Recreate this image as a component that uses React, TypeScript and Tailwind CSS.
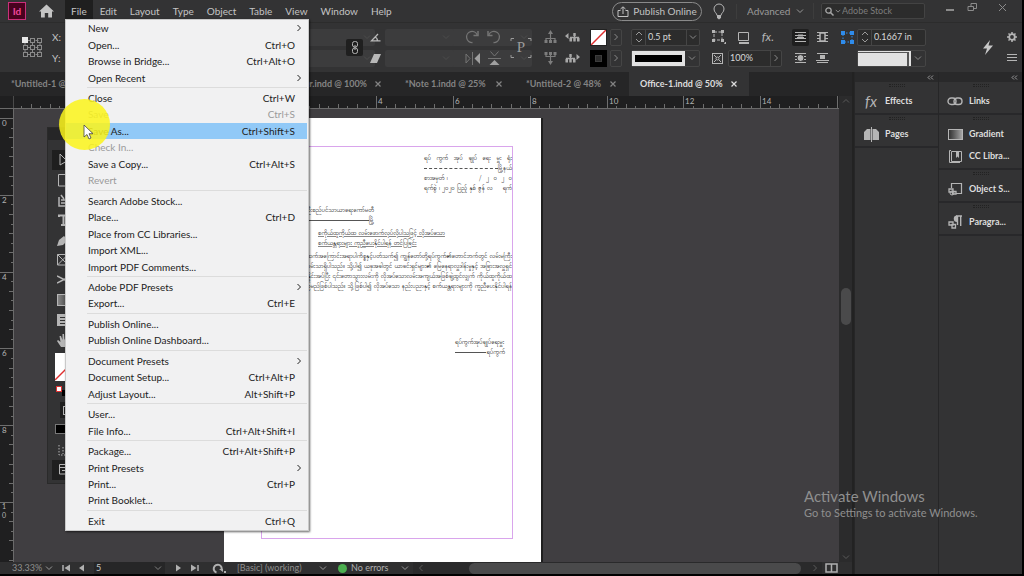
import { useState } from 'react';
import type { ReactNode } from 'react';

type MenuEntry = { label: string; keys?: string; sub?: boolean; off?: boolean };

const MENUS = ['File', 'Edit', 'Layout', 'Type', 'Object', 'Table', 'View', 'Window', 'Help'];

const FILE_MENU: MenuEntry[][] = [
  [
    { label: 'New', sub: true },
    { label: 'Open...', keys: 'Ctrl+O' },
    { label: 'Browse in Bridge...', keys: 'Ctrl+Alt+O' },
    { label: 'Open Recent', sub: true },
  ],
  [
    { label: 'Close', keys: 'Ctrl+W' },
    { label: 'Save', keys: 'Ctrl+S', off: true },
    { label: 'Save As...', keys: 'Ctrl+Shift+S' },
    { label: 'Check In...', off: true },
    { label: 'Save a Copy...', keys: 'Ctrl+Alt+S' },
    { label: 'Revert', off: true },
  ],
  [
    { label: 'Search Adobe Stock...' },
    { label: 'Place...', keys: 'Ctrl+D' },
    { label: 'Place from CC Libraries...' },
    { label: 'Import XML...' },
    { label: 'Import PDF Comments...' },
  ],
  [{ label: 'Adobe PDF Presets', sub: true }, { label: 'Export...', keys: 'Ctrl+E' }],
  [{ label: 'Publish Online...' }, { label: 'Publish Online Dashboard...' }],
  [
    { label: 'Document Presets', sub: true },
    { label: 'Document Setup...', keys: 'Ctrl+Alt+P' },
    { label: 'Adjust Layout...', keys: 'Alt+Shift+P' },
  ],
  [{ label: 'User...' }, { label: 'File Info...', keys: 'Ctrl+Alt+Shift+I' }],
  [
    { label: 'Package...', keys: 'Ctrl+Alt+Shift+P' },
    { label: 'Print Presets', sub: true },
    { label: 'Print...', keys: 'Ctrl+P' },
    { label: 'Print Booklet...' },
  ],
  [{ label: 'Exit', keys: 'Ctrl+Q' }],
];

const TABS = [
  { name: '*Untitled-1 @ 50%', width: 'w-[130px]' },
  { name: '*Letter.indd @ 100%', width: 'w-[264px] justify-end' },
  { name: '*Note 1.indd @ 25%', width: 'w-[121px]' },
  { name: '*Untitled-2 @ 48%', width: 'w-[114px]' },
  { name: 'Office-1.indd @ 50%', width: 'w-[120px]' },
];

// pixels per inch on the rulers
const INCH = 38.4;

function Icon({ w = 14, h = 14, box, className = '', children }: { w?: number; h?: number; box?: string; className?: string; children: ReactNode }) {
  return (
    <svg width={w} height={h} viewBox={box || `0 0 ${w} ${h}`} fill="none" stroke="currentColor" className={`shrink-0 ${className}`} aria-hidden="true">
      {children}
    </svg>
  );
}

function Chevron({ dir = 'down', className = '' }: { dir?: 'down' | 'up' | 'left' | 'right'; className?: string }) {
  const d = { down: 'M1 2.5 4 5.5 7 2.5', up: 'M1 5.5 4 2.5 7 5.5', left: 'M5.5 1 2.5 4 5.5 7', right: 'M2.5 1 5.5 4 2.5 7' }[dir];
  return <Icon w={8} h={8} className={className}><path d={d} /></Icon>;
}

function Stepper() {
  return (
    <span className="flex w-[14px] flex-col items-center justify-center border-r border-[#454545] text-[#999]">
      <Icon w={8} h={14}><path d="M1 5 4 2 7 5M1 9 4 12 7 9" /></Icon>
    </span>
  );
}

function DimField({ label, className = '' }: { label: string; className?: string }) {
  return (
    <div className={`flex h-[17px] items-center rounded-xs bg-[#3c3c3d] pr-1 text-[#4c4c4c] ${className}`}>
      <input aria-label={label} disabled className="min-w-0 flex-1" />
      <Chevron />
    </div>
  );
}

function Drop({ label, value, className = '' }: { label: string; value: string; className?: string }) {
  return (
    <label className={`flex items-center justify-between ${className}`}>
      <select aria-label={label} className="appearance-none outline-none">
        <option>{value}</option>
      </select>
      <Chevron className="text-[#999]" />
    </label>
  );
}

function MenuBar() {
  return (
    <header className="flex h-[23px] shrink-0 items-center border-b border-[#2c2c2c] bg-[#333334]">
      <div className="ml-2 flex size-[18px] items-center justify-center border border-[#c9307a] bg-[#49021f] text-[10px] leading-none font-bold text-[#f0479a]">Id</div>
      <button aria-label="Home" className="ml-[13px] text-[#c4c4c4]">
        <Icon w={15} h={14}><path fill="currentColor" stroke="none" d="M7.5.5 15 7.5H13V13.5H9.2V9H5.8V13.5H2V7.500H0Z" /></Icon>
      </button>
      <nav className="ml-[11px] flex h-full gap-px">
        {MENUS.map((m) => (
          <button key={m} className={`px-[6px] text-[10px] ${m === 'File' ? 'bg-[#1f1f1f]' : ''}`}>{m}</button>
        ))}
      </nav>
      <div className="ml-auto flex h-full items-center">
        <button className="flex h-[19px] w-[90px] items-center justify-center gap-1 rounded-full border border-[#8a8a8a] text-[10px] text-[#c2c2c2]">
          <Icon w={12} h={11}><path d="M3.500 4.500H1V10.500H11V4.500H8.500M6 8V1M3.500 3 6 .8 8.500 3" /></Icon>
          Publish Online
        </button>
        <button aria-label="Learn" className="ml-[11px] text-[#b5b5b5]">
          <Icon w={12} h={17}><path d="M4 12.500C4 10 1 9.500 1 6A5 5 0 0 1 11 6C11 9.500 8 10 8 12.500Z" /><path fill="currentColor" d="M4.500 13H7.500V15L6 16 4.500 15Z" /></Icon>
        </button>
        <Drop label="Workspace" value="Advanced" className="ml-[11px] h-[15px] w-[68px] border-l border-[#3d3d3d] pl-[10px] text-[10px] text-[#9a9a9a]" />
        <span className="ml-[9px] h-4 w-px bg-[#3d3d3d]" />
        <label className="ml-[7px] flex h-4 w-[104px] items-center rounded-xs border border-[#434343] bg-[#2c2c2c] px-[3px] text-[#a5a5a5]">
          <Icon w={9} h={9}><circle cx="3.500" cy="3.500" r="2.700" strokeWidth="1.300" /><path strokeWidth="1.500" d="M5.500 5.500 8.500 8.500" /></Icon>
          <Chevron className="scale-75" />
          <input aria-label="Search" placeholder="Adobe Stock" className="min-w-0 flex-1 text-[9px] outline-none placeholder:text-[#7c7c7c]" />
        </label>
        <div className="ml-[14px] flex h-full items-center text-[#8b8b8b]">
          <button aria-label="Minimize" className="flex w-[22px] justify-center"><Icon w={10} h={8}><path strokeWidth="2" d="M1 3H9" /></Icon></button>
          <button aria-label="Restore" className="mb-2 flex w-[22px] justify-center"><Icon w={11} h={10}><path d="M1 4.500H6.500V8.500H1ZM4 4V1.500H9.500V6.500H7" /></Icon></button>
          <button aria-label="Close window" className="mb-2 flex w-[39px] justify-center"><Icon w={9} h={9}><path d="M1 1 8 8M8 1 1 8" /></Icon></button>
        </div>
      </div>
    </header>
  );
}

function WrapIcon({ children }: { children?: ReactNode }) {
  return (
    <Icon w={13} h={12}>
      <path d="M1 1.500H12M1 4.500H12M1 7.500H12M1 10.500H12" />
      {children}
    </Icon>
  );
}

function TreeIcon({ className }: { className?: string }) {
  return <Icon w={13} h={14} className={className}><path strokeWidth="1.200" d="M6.500 12V2M2 12V8.500H11V12" /><path fill="currentColor" stroke="none" d="M4 4 6.500 0 9 4ZM.5 10H3.500V13H.5ZM5 10H8V13H5ZM9.500 10H12.500V13H9.500Z" /></Icon>;
}

function SideTree({ className = '' }: { className?: string }) {
  return <Icon w={15} h={10} className={className}><path strokeWidth="1.300" d="M5 5.500H13.500V9M9.500 2V9M5.500 9V5.500" /><path fill="currentColor" stroke="none" d="M0 4 3.500 1V7ZM4.500 6H7V9.500H4.500ZM8.300 6H10.700V9.500H8.300ZM12 6H14.500V9.500H12ZM8.300 1H10.700V4H8.300Z" /></Icon>;
}

function ControlBar() {
  const col = 'flex flex-col gap-1';
  const cell = 'flex h-[17px] items-center justify-center';
  const box = 'flex h-[17px] rounded-xs border border-[#454545]';
  return (
    <section aria-label="Control" className="flex h-[49px] shrink-0 items-center bg-[#333334] text-[10px]">
      <div className="flex w-[341px] items-center pl-[22px]">
        <Icon w={21} h={21} className="mr-[9px] text-[#8a8a8a]">
          <path d="M5.500 3.500H8.500M13.500 3.500H16.500M5.500 10.500H8.500M13.500 10.500H16.500M5.500 17.500H8.500M13.500 17.500H16.500M3 6V8M10.500 6V8M18 6V8M3 13V15M10.500 13V15M18 13V15" />
          {[1, 8, 15].map((y) => [1, 8, 15].map((x) => <rect key={`${x}${y}`} x={x + 0.5} y={y + 0.5} width="4" height="4" />))}
          <rect x="0" y="0" width="6" height="6" fill="#e8e8e8" stroke="none" />
        </Icon>
        <div className={`${col} flex-1`}>
          {['X', 'Y'].map((a) => (
            <div key={a} className="flex h-[17px] items-center gap-3">
              <span>{a}:</span>
              <DimField label={`${a} location`} className="flex-1" />
              <DimField label={a === 'X' ? 'Width' : 'Height'} className="flex-1" />
              <DimField label={`Scale ${a}`} className="flex-1" />
            </div>
          ))}
        </div>
      </div>
      <button aria-label="Constrain proportions" className="ml-[5px] flex size-[17px] items-center justify-center rounded-xs bg-[#1f1f1f] text-[#b5b5b5]">
        <Icon w={8} h={13}><rect x="1.500" y=".5" width="5" height="5.500" rx="2" /><rect x="1.500" y="7" width="5" height="5.500" rx="2" /><path d="M4 4V9" /></Icon>
      </button>
      <div className={`${col} ml-[7px] text-[#b8b8b8]`}>
        <span className={cell}><Icon w={11} h={9}><path strokeWidth="1.300" d="M8 1 1.500 7.800H10.500M5 4Q7.500 5 7.500 8" /></Icon></span>
        <span className={cell}><Icon w={11} h={9}><path fill="currentColor" stroke="none" d="M4 0H11L7 9H0Z" /></Icon></span>
      </div>
      <div className={`${col} ml-1`}>
        <DimField label="Rotation angle" className="w-[69px]" />
        <DimField label="Shear angle" className="w-[69px]" />
      </div>
      <div className={`${col} ml-[11px] text-[#747474]`}>
        <div className="flex gap-2">
          <button aria-label="Rotate clockwise" className={cell}><Icon><path strokeWidth="1.300" d="M7.500 12.500A5.500 5.500 0 1 1 12.200 5" /><path strokeWidth="1.500" d="M13 1V5.500H8.500" /></Icon></button>
          <button aria-label="Rotate counterclockwise" className={cell}><Icon><path strokeWidth="1.300" d="M6.500 12.500A5.500 5.500 0 1 0 1.800 5" /><path strokeWidth="1.500" d="M1 1V5.500H5.500" /></Icon></button>
        </div>
        <div className="flex gap-2">
          <button aria-label="Flip horizontal" className={cell}><Icon w={15} h={13}><path d="M1 2V11L5 6.500ZM7.500 0V13" /><path fill="#a0a0a0" stroke="none" d="M15 1V12L9.500 6.500Z" /></Icon></button>
          <button aria-label="Flip vertical" className={cell}><Icon w={13} h={14}><path d="M2.500.5 6.500 5 10.500.5M0 7.500H13" /><path fill="#a0a0a0" stroke="none" d="M1.500 14H11.500L6.500 9Z" /></Icon></button>
        </div>
      </div>
      <div className="relative ml-[9px] flex size-[22px] items-center justify-center font-['Liberation_Serif',serif] text-[15px] text-[#9a9a9a]">
        <Icon w={22} h={22} className="absolute inset-0"><path d="M1 4V1.500H4M18 1.500H21V4M1 18V20.500H4M18 20.500H21V18" /></Icon>
        P
      </div>
      <div className={`${col} ml-[12px] text-[#7d7d7d]`}>
        <button aria-label="Select container" className={cell}><TreeIcon /></button>
        <button aria-label="Select content" className={cell}><TreeIcon className="-scale-y-100" /></button>
      </div>
      <div className={`${col} ml-2 text-[#a8a8a8]`}>
        <button aria-label="Select previous object" className={cell}><SideTree /></button>
        <button aria-label="Select next object" className={cell}><SideTree className="-scale-x-100" /></button>
      </div>
      <div className={`${col} ml-[10px]`}>
        <button aria-label="Fill" className="size-[17px] border border-[#222] bg-white text-[#e03030]"><Icon w={15} h={15}><path strokeWidth="1.500" d="M0 15 15 0" /></Icon></button>
        <button aria-label="Stroke" className="flex size-[17px] items-center justify-center bg-black"><span className="size-[7px] border border-[#3c3c3c] bg-[#2b2b2b]" /></button>
      </div>
      <div className={`${col} ml-[3px] text-[#8a8a8a]`}>
        <button aria-label="Fill swatches" className={`${box} w-3 items-center justify-center`}><Chevron dir="right" /></button>
        <button aria-label="Stroke swatches" className={`${box} w-3 items-center justify-center`}><Chevron dir="right" /></button>
      </div>
      <div className={`${col} ml-[9px] w-[69px] text-[#8a8a8a]`}>
        <div className={`${box} bg-[#2c2c2c]`}>
          <Stepper />
          <input aria-label="Stroke weight" defaultValue="0.5 pt" className="min-w-0 flex-1 pl-[2px] text-[9px] text-[#d8d8d8] outline-none" />
          <button aria-label="Stroke weight presets" className="border-l border-[#454545] px-[2px]"><Chevron /></button>
        </div>
        <button aria-label="Stroke type" className={`${box} items-center`}>
          <span className="flex h-full flex-1 items-center bg-[#e2e2e2] px-[3px]"><span className="h-[7px] w-full bg-black" /></span>
          <Chevron className="mx-[3px]" />
        </button>
      </div>
      <div className={`${col} ml-[12px] w-[70px] text-[#b5b5b5]`}>
        <div className="flex h-[17px] items-center justify-between pr-[8px]">
          <button aria-label="Corner options"><Icon><rect x="2" y="2" width="8" height="8" strokeDasharray="3 1.500" /><path fill="currentColor" stroke="none" d="M0 0H3V3H0ZM9 0H12V3H9ZM0 9H3V12H0ZM9 9H12V12H9ZM13 12H14V14H12Z" /></Icon></button>
          <button aria-label="Drop shadow"><Icon w={13} h={13}><path d="M1.500 1.500H11.500V9.500H1.500Z" /><path strokeWidth="2" d="M2 12H12" /></Icon></button>
          <button aria-label="Effects" className="text-[12px] leading-none italic">fx.</button>
        </div>
        <div className="flex h-[17px] items-center gap-[5px]">
          <Icon w={11} h={11}><rect x=".5" y=".5" width="10" height="10" /><path d="M2 2 4.500 4.500M9 2 6.500 4.500M2 9 4.500 6.500M9 9 6.500 6.500" /><circle cx="5.500" cy="5.500" r="1.500" /></Icon>
          <div className={`${box} flex-1 bg-[#2c2c2c] text-[#8a8a8a]`}>
            <input aria-label="Opacity" defaultValue="100%" className="w-0 min-w-0 flex-1 pl-px text-[9px] text-[#d8d8d8] outline-none" />
            <button aria-label="Opacity slider" className="border-l border-[#454545] px-px"><Chevron dir="right" /></button>
          </div>
        </div>
      </div>
      <div className={`${col} ml-[10px] text-[#b5b5b5]`}>
        <button aria-label="No text wrap" className={`${cell} w-[17px] rounded-xs bg-[#1f1f1f]`}><WrapIcon><path strokeWidth="2" d="M4 4.500H9M3 7H10" /></WrapIcon></button>
        <button aria-label="Wrap around object shape" className={`${cell} w-[17px]`}><WrapIcon><circle cx="6.500" cy="6" r="3.500" fill="currentColor" stroke="#333334" /></WrapIcon></button>
      </div>
      <div className={`${col} ml-[5px] text-[#b5b5b5]`}>
        <button aria-label="Wrap around bounding box" className={`${cell} w-[17px]`}><WrapIcon><rect x="4" y="2" width="5" height="8" fill="#333334" strokeWidth="1.500" /></WrapIcon></button>
        <button aria-label="Jump object" className={`${cell} w-[17px]`}><Icon w={13} h={12}><path d="M1 1.500H12M1 10.500H12M0 8.500H13" /><path fill="currentColor" stroke="none" d="M4 3H9V7H4Z" /></Icon></button>
      </div>
      <div className={`${col} ml-[10px] text-[#2f8ceb]`}>
        <span className={cell}><Icon w={13} h={13}><path strokeDasharray="1.500 1.500" d="M2 2H11V11H2Z" /><path fill="currentColor" stroke="none" d="M0 0H4V4H0ZM9 0H13V4H9ZM0 9H4V13H0ZM9 9H13V13H9Z" /></Icon></span>
        <span className={cell} />
      </div>
      <div className={`${col} ml-[3px] w-[69px] text-[#8a8a8a]`}>
        <div className={`${box} bg-[#2c2c2c]`}>
          <Stepper />
          <input aria-label="Corner size" defaultValue="0.1667 in" className="min-w-0 flex-1 pl-[2px] text-[9px] text-[#d8d8d8] outline-none" />
        </div>
        <button aria-label="Corner shape" className={`${box} items-center`}>
          <span className="flex h-full flex-1 bg-[#e2e2e2] pt-px pr-[2px]"><span className="w-full border-t border-r-2 border-[#555]" /></span>
          <Chevron className="mx-[3px]" />
        </button>
      </div>
      <button aria-label="Quick apply" className="ml-auto text-[#c8c8c8]"><Icon w={10} h={15}><path fill="currentColor" stroke="none" d="M7 0 0 8.500H4L2 15 10 5.500H5.500Z" /></Icon></button>
      <div className={`${col} mr-[5px] ml-[14px] text-[#b5b5b5]`}>
        <button aria-label="Customize" className={cell}><Icon w={10} h={10}><circle cx="5" cy="5" r="2.800" strokeWidth="1.800" /><path strokeWidth="1.500" d="M5 0V2M5 8V10M0 5H2M8 5H10M1.500 1.500 2.800 2.800M7.200 7.200 8.500 8.500M8.500 1.500 7.200 2.800M2.800 7.200 1.500 8.500" /></Icon></button>
        <button aria-label="Panel menu" className={cell}><Icon w={10} h={8}><path d="M0 .5H10M0 3.500H10M0 6.500H10" /></Icon></button>
      </div>
    </section>
  );
}

function TabStrip({ active, onPick }: { active: number; onPick: (i: number) => void }) {
  return (
    <div className="flex h-6 shrink-0 bg-[#262627] text-[9px] font-bold text-[#848484]">
      {TABS.map((t, i) => (
        <div key={t.name} className={`flex shrink-0 items-center justify-between pr-[13px] pl-[11px] ${t.width} ${i === active ? 'bg-[#333334] text-[#dedede]' : ''}`}>
          <button onClick={() => onPick(i)} className="mr-2 whitespace-nowrap">{t.name}</button>
          <button aria-label={`Close ${t.name}`}><Icon w={6} h={6}><path strokeWidth="1.200" d="M.5.5 5.500 5.500M5.500.5.5 5.500" /></Icon></button>
        </div>
      ))}
    </div>
  );
}

function TopRuler() {
  const origin = 208.5;
  const ticks = Array.from({ length: 90 }, (_, i) => i - 22);
  return (
    <svg className="h-[12px] min-w-0 flex-1 bg-[#1f1f20]" stroke="#6e6e6e" aria-hidden="true">
      {ticks.map((n) => {
        const x = Math.round(origin + (n * INCH) / 4) + 0.5;
        const top = n % 8 === 0 ? 0 : n % 2 === 0 ? 8 : 10;
        return <path key={n} d={`M${x} ${top}V13`} />;
      })}
      {[-4, -2, 0, 2, 4, 6, 8, 10, 12, 14].map((n) => (
        <text key={n} x={Math.round(origin + n * INCH) + 2} y="8" fill="#b4b4b4" stroke="none" fontSize="8">{Math.abs(n)}</text>
      ))}
    </svg>
  );
}

function LeftRuler() {
  const ticks = Array.from({ length: 49 }, (_, i) => i);
  return (
    <svg className="w-[14px] shrink-0 border-r border-[#6a6a6a] bg-[#1f1f20]" stroke="#6e6e6e" aria-hidden="true">
      {ticks.map((n) => {
        const y = Math.round(9 + (n * INCH) / 4) + 0.5;
        const left = n % 8 === 0 ? 0 : n % 2 === 0 ? 9 : 11;
        return <path key={n} d={`M${left} ${y}H14`} />;
      })}
      {[0, 2, 4, 6, 8].map((n) => (
        <text key={n} x="2" y={Math.round(9 + n * INCH) + 8} fill="#b4b4b4" stroke="none" fontSize="8">{n}</text>
      ))}
      <text x="2" y="400" fill="#b4b4b4" stroke="none" fontSize="7">1</text>
      <text x="2" y="409" fill="#b4b4b4" stroke="none" fontSize="7">0</text>
    </svg>
  );
}

function Toolbox() {
  const tool = 'flex h-5 w-full items-center pl-[6px]';
  return (
    <aside aria-label="Tools" className="absolute top-[18px] left-[33px] flex w-9 flex-col border border-[#2a2a2a] bg-[#333334] pt-[10px] text-[#b5b5b5]">
      <span className="-mt-[10px] mb-[10px] h-[12px] bg-[#262627]" />
      <button aria-label="Selection" className={`${tool} ml-1 bg-[#1f1f1f]`}><Icon w={12} h={14}><path d="M2 1V12L9 8Z" /></Icon></button>
      <button aria-label="Page" className={`${tool} pl-[10px]`}><Icon w={12} h={13}><path d="M.5.5H10V12H.5Z" /></Icon></button>
      <button aria-label="Content collector" className={`${tool} pl-[10px]`}><Icon w={12} h={13}><path strokeWidth="1.500" d="M1 3V12H11M3 9H10M3 6H10M3 1 6 5" /></Icon></button>
      <button aria-label="Type" className={`${tool} pl-[10px]`}><Icon w={12} h={12}><path strokeWidth="2" d="M1 3V1.500H10V3M5.500 1.500V11M3 11H8" /></Icon></button>
      <button aria-label="Pen" className={`${tool} pl-[9px]`}><Icon w={12} h={12}><path fill="currentColor" stroke="none" d="M0 12 2 6 7 2 11 6 6 11Z" /></Icon></button>
      <button aria-label="Frame" className={`${tool} pl-[9px]`}><Icon w={12} h={12}><path d="M.5.5H11V11H.5ZM.5.5 11 11M11 .5.5 11" /></Icon></button>
      <button aria-label="Scissors" className={`${tool} pl-[9px]`}><Icon w={12} h={10}><path strokeWidth="1.500" d="M0 1 10 6M0 8 10 3" /></Icon></button>
      <button aria-label="Gradient" className={`${tool} pl-[9px]`}><span className="h-3 w-3 border border-[#b5b5b5] bg-linear-to-r from-[#888] to-[#444]" /></button>
      <button aria-label="Note" className={`${tool} pl-[9px]`}><Icon w={12} h={12}><path fill="#b5b5b5" stroke="none" d="M0 0H12V12H0Z" /><path stroke="#333" d="M3 3.500H10M3 6.500H10M3 9.500H10" /></Icon></button>
      <button aria-label="Hand" className={`${tool} pl-[9px]`}><Icon w={12} h={13}><path fill="currentColor" stroke="none" d="M4 13 0 7 1 6 3.500 8 2.500 2H4L5.500 6V0H7L7.500 6 9.500 1 10.500 2 10 9 9 13Z" /></Icon></button>
      <span className="mt-[3px] ml-[7px] h-[28px] w-[28px] bg-white text-[#e03030]"><Icon w={28} h={28}><path strokeWidth="1.500" d="M0 27 18 9" /></Icon></span>
      <span className="mt-[5px] ml-[8px] flex h-3"><span className="size-[6px] border border-[#d33] bg-white" /><span className="mt-1 size-[6px] bg-black" /></span>
      <button aria-label="Formatting" className="mt-1 ml-[12px] flex h-4 items-center bg-[#1f1f1f] pl-[3px]"><span className="size-[9px] border border-[#b5b5b5]" /></button>
      <button aria-label="Apply color" className="mt-[6px] ml-[7px] h-[10px] w-6 border border-[#777] bg-black" />
      <button aria-label="Screen mode" className={`${tool} mt-[6px] pl-[10px]`}><Icon w={12} h={12}><path strokeDasharray="1.500 1.500" d="M1 1V11H11M5 3V10" /></Icon></button>
      <button aria-label="Preview" className={`${tool} mb-[3px] ml-1 bg-[#1f1f1f]`}><Icon w={12} h={12} className="ml-px"><path d="M.5.5H10V10H.5ZM.5 3.500H10M3 6.500H10" /></Icon></button>
    </aside>
  );
}

function Spread({ words }: { words: string[] }) {
  return <p className="flex justify-between whitespace-nowrap">{words.map((w, i) => <span key={i}>{w}</span>)}</p>;
}

function DocumentPage() {
  return (
    <article lang="my" className="absolute top-[9px] left-[210px] h-[460px] w-[319px] border-r-2 border-[#1f1f1f] bg-white pt-[28px] pr-[28px] pl-[37px] font-['Padauk','Noto_Sans_Myanmar','Noto_Sans',sans-serif] text-[6px] leading-[10px] text-black">
      <div className="flex h-[393px] flex-col border border-[#d9a5ec] pt-[7px]">
        <div className="w-[88px] self-end">
          <Spread words={['ရပ်', 'ကွက်', 'အုပ်', 'ချုပ်', 'ရေး', 'မှူး', 'ရုံး']} />
          <p className="flex"><span className="mb-[5px] flex-1 border-b border-dashed border-[#555]" />မြို့နယ်</p>
          <p className="flex justify-between"><span>စာအမှတ် ၊</span><span>/ &nbsp;၂ &nbsp;၀ &nbsp;၂ &nbsp;၀</span></p>
          <p className="flex justify-between whitespace-nowrap"><span>ရက်စွဲ ၊ ၂၀၂၀ ပြည့် နှစ် ဇွန် လ</span><span>ရက်</span></p>
        </div>
        <div className="mt-[12px] w-[112px]">
          <p className="text-right whitespace-nowrap">ဦးစည်ပင်သာယာရေးကော်မတီ</p>
          <p className="flex"><span className="mb-[5px] flex-1 border-b border-[#555]" />မြို့</p>
        </div>
        <div className="mt-[3px] ml-[56px] self-start whitespace-nowrap underline decoration-[#888]">
          <p>စကိုယ်ထူကိုယ်ထ လမ်းဖောက်လုပ်လိုပါသဖြင့် လိုအပ်သော</p>
          <p>စက်ယန္တရားများ ကူညီပေးနိုင်ပါရန် တင်ပြခြင်း</p>
        </div>
        <div className="mt-[3px] flex flex-col items-end overflow-hidden whitespace-nowrap">
          <p>အထက်အကြောင်းအရာပါကိစ္စနှင့်ပတ်သက်၍ ကျွန်တော်တို့ရပ်ကွက်၏တောင်ဘက်တွင် လမ်းမကြီး</p>
          <p>လမ်းသာရှိပါသည်။ သို့ပါ၍ ယခုအခါတွင် ယာခင်းရှင်များ၏ မြေနေရာလှူဒါန်းမှုနှင့် အခြားအလှူရှင်</p>
          <p>နှိုင်းအပ်ပြီး ၎င်းတောသွားလမ်းကို လိုအပ်သောလမ်းအကျယ်အဖြစ်ချဲ့ထွင်လျှက် ကိုယ်ထူကိုယ်ထ</p>
          <p>ကြမည်ဖြစ်ပါသည်။ သို့ဖြစ်ပါ၍ လိုအပ်သော နည်းပညာနှင့် စက်ယန္တရားများကို ကူညီပေးနိုင်ပါရန်</p>
        </div>
        <div className="mt-[46px] mr-[7px] w-[50px] self-end">
          <p className="whitespace-nowrap">ရပ်ကွက်အုပ်ချုပ်ရေးမှူး</p>
          <p className="flex"><span className="mb-[5px] flex-1 border-b border-[#555]" />ရပ်ကွက်</p>
        </div>
      </div>
    </article>
  );
}

function StatusBar() {
  return (
    <footer className="flex h-[12px] shrink-0 items-center bg-[#2f2f30] text-[9px] leading-[12px] text-[#b0b0b0]">
      <Drop label="Zoom level" value="33.33%" className="ml-3 w-[41px] text-[#8f8f8f]" />
      <button aria-label="First page" className="ml-[9px]"><Icon w={8} h={8}><path strokeWidth="1.500" d="M1 1V7" /><path fill="currentColor" stroke="none" d="M8 .5V7.500L2.500 4Z" /></Icon></button>
      <button aria-label="Previous page" className="ml-[9px]"><Icon w={5} h={8}><path fill="currentColor" stroke="none" d="M5 .5V7.500L0 4Z" /></Icon></button>
      <label className="ml-[10px] flex w-[71px] items-center bg-[#262627]">
        <input aria-label="Page" defaultValue="5" className="h-[12px] min-w-0 flex-1 pl-[2px] text-[#c8c8c8] outline-none" />
        <Chevron className="mr-[3px] text-[#808080]" />
      </label>
      <button aria-label="Next page" className="ml-[11px]"><Icon w={5} h={8}><path fill="currentColor" stroke="none" d="M0 .5V7.500L5 4Z" /></Icon></button>
      <button aria-label="Last page" className="ml-[10px]"><Icon w={8} h={8}><path strokeWidth="1.500" d="M7 1V7" /><path fill="currentColor" stroke="none" d="M0 .5V7.500L5.500 4Z" /></Icon></button>
      <button aria-label="Open page" className="ml-[13px]"><Icon w={14} h={11}><path strokeWidth="2" d="M4.500 9.500A4 4 0 1 1 9.500 7" /><path fill="currentColor" stroke="none" d="M7 6H11V9ZM12 8H14V10H12Z" /></Icon></button>
      <Drop label="Preflight profile" value="[Basic] (working)" className="ml-[11px] w-[90px] text-[#8f8f8f]" />
      <span className="ml-[11px] size-[9px] rounded-full bg-[#4caf50]" />
      <Drop label="Preflight status" value="No errors" className="ml-1 w-[58px]" />
      <div className="ml-1 flex h-full flex-1 items-center justify-between bg-[#2a2a2b] pr-[3px] pl-1 text-[#5a5a5a]">
        <Chevron dir="left" />
        <span className="ml-[44px] h-[11px] flex-1 rounded-full bg-[#4a4a4b]" />
        <Chevron dir="right" className="ml-[10px]" />
      </div>
      <button aria-label="Split view" className="mr-[14px] ml-[3px]"><Icon w={13} h={10}><path strokeWidth="1.500" d="M1 1H12V9H1ZM6.500 1V9" /></Icon></button>
    </footer>
  );
}

const dockIcons: Record<string, ReactNode> = {
  Effects: <span className="w-[15px] text-center text-[15px] leading-none font-normal italic">fx</span>,
  Pages: <Icon w={15} h={15}><path fill="currentColor" stroke="none" d="M0 5 3 2H6.500V13H0ZM8.500 2H12L15 5V13H8.500Z" /><path d="M7.500 0V15" /></Icon>,
  Links: <Icon w={16} h={9}><rect x="1" y="1" width="8" height="6.500" rx="3.200" strokeWidth="1.400" /><rect x="7" y="1" width="8" height="6.500" rx="3.200" strokeWidth="1.400" /></Icon>,
  Gradient: <span className="h-[11px] w-[15px] border border-[#b5b5b5] bg-linear-to-r from-[#333] to-[#a5a5a5]" />,
  'CC Libra...': <Icon w={15} h={13}><path d="M3.500 1.500H13.500V11.500H3.500ZM3 .5H1.500V12.500H12" /><path fill="currentColor" stroke="none" d="M8 2H11V8L9.500 6.500 8 8Z" /></Icon>,
  'Object S...': <Icon w={15} h={14}><path d="M3.500 6V1.500H13.500V11.500H8M3.500 1.500H5M12 1.500H13.500V3" strokeWidth="1.200" /><path strokeWidth="1.300" d="M1 7H5V10H1ZM4.500 9.500H8V12H4.500Z" /><circle cx="4" cy="11" r="2" /></Icon>,
  'Paragra...': <Icon w={15} h={14}><path strokeWidth="1.400" d="M9.500 1V10M12.700 1V11M8 1H14" /><path fill="currentColor" stroke="none" d="M9 .5A3.200 3.200 0 0 0 9 7Z" /><path strokeWidth="1.300" d="M1 7H5V10H1ZM4 9.500H7.500V13H4Z" /></Icon>,
};

function DockColumn({ groups }: { groups: string[][] }) {
  return (
    <div className="flex w-[84px] flex-col border-l border-[#262627] bg-[#333334]">
      <div className="flex h-[10px] shrink-0 items-center justify-end bg-[#29292a] pr-1 text-[#9a9a9a]">
        <Icon w={7} h={5}><path d="M3 .5 1 2.500 3 4.500M6 .5 4 2.500 6 4.500" /></Icon>
      </div>
      {groups.map((g) => (
        <div key={g[0]} className="border-b-2 border-[#28282a] pb-px">
          <div className="flex h-2 justify-center pt-[2px]"><span className="h-[3px] w-4 border-y border-dotted border-[#222]" /></div>
          {g.map((name) => (
            <button key={name} className="flex h-[22px] w-full items-center gap-[6px] pl-2 text-[9px] font-bold text-[#dedede]">
              <span className="flex w-4 justify-center text-[#b5b5b5]">{dockIcons[name]}</span>
              {name}
            </button>
          ))}
        </div>
      ))}
    </div>
  );
}

function FileMenu() {
  return (
    <div role="menu" aria-label="File" className="absolute top-[19px] left-[65px] flex h-[512px] w-[244px] flex-col border border-[#c9c9c9] bg-[#f1f1f2] pb-px text-[10px] text-[#222] shadow-[1px_1px_2px_rgba(0,0,0,0.6)]">
      {FILE_MENU.map((section, i) => (
        <div key={i} className="contents">
          {i > 0 && <hr className="mr-px ml-[21px] h-1 shrink-0 border-0 bg-[linear-gradient(#dcdcdc,#dcdcdc)] bg-[length:100%_1px] bg-center bg-no-repeat" />}
          {section.map((item) => (
            <button
              key={item.label}
              role="menuitem"
              disabled={item.off}
              className={`mr-px flex min-h-0 flex-1 items-center justify-between pr-3 pl-[22px] leading-none disabled:text-[#9a9a9a] ${item.label === 'Save As...' ? 'bg-[#91c9f7]' : ''}`}
            >
              <span>{item.label}</span>
              {item.keys && <span>{item.keys}</span>}
              {item.sub && <Chevron dir="right" className="-mr-2" />}
            </button>
          ))}
        </div>
      ))}
    </div>
  );
}

export default function App() {
  const [active, setActive] = useState(4);

  return (
    <div className="relative flex h-screen flex-col overflow-hidden border-r-2 border-b-2 border-black bg-[#333334] font-['Lato','Open_Sans',sans-serif] text-[#c4c4c4]">
      <MenuBar />
      <ControlBar />
      <main className="flex min-h-0 flex-1">
        <div className="flex min-w-0 flex-1 flex-col">
          <TabStrip active={active} onPick={setActive} />
          <div className="flex min-h-0 flex-1">
            <div className="flex min-w-0 flex-1 flex-col">
              <div className="flex border-b border-[#6a6a6a]">
                <span className="w-[14px] shrink-0 border-r border-[#4a4a4a] bg-[#1f1f20]" />
                <TopRuler />
              </div>
              <div className="flex min-h-0 flex-1">
                <LeftRuler />
                <div className="relative min-w-0 flex-1 overflow-hidden bg-[#403e41]">
                  <DocumentPage />
                  <Toolbox />
                </div>
              </div>
            </div>
            <div className="flex w-[13px] flex-col items-center justify-between bg-[#2b2b2c] py-px text-[#5a5a5a]">
              <Chevron dir="up" />
              <span className="mt-[76px] h-[37px] w-[10px] rounded-full bg-[#4a4a4b]" />
              <Chevron className="mt-[122px]" />
            </div>
          </div>
          <StatusBar />
        </div>
        <div className="flex border-l-2 border-[#222]">
          <DockColumn groups={[['Effects'], ['Pages']]} />
          <DockColumn groups={[['Links'], ['Gradient', 'CC Libra...'], ['Object S...'], ['Paragra...']]} />
        </div>
      </main>

      <FileMenu />

      {/* click highlight and pointer */}
      <span className="pointer-events-none absolute top-[99px] left-[59px] size-[51px] rounded-full bg-[#fbf51a]/85" />
      <svg width="11" height="16" viewBox="0 0 11 16" className="pointer-events-none absolute top-[124px] left-[83px]" aria-hidden="true">
        <path d="M1 1V13L4 10.500 6 15 8 14 6 9.700H10Z" fill="#fff" stroke="#444" strokeWidth=".8" />
      </svg>

      <div className="pointer-events-none absolute right-[40px] bottom-[53px] w-[178px] whitespace-nowrap text-[#8f8f8f]">
        <p className="text-[15px] leading-[18px]">Activate Windows</p>
        <p className="text-[11px] leading-4">Go to Settings to activate Windows.</p>
      </div>
    </div>
  );
}
